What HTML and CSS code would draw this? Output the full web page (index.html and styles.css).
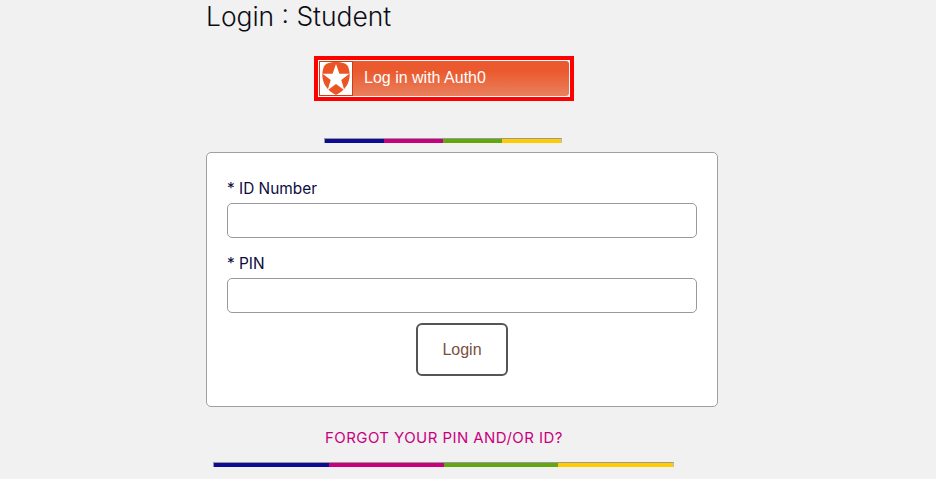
FILE: index.html
```html
<!DOCTYPE html>
<html lang="en">
<head>
    <meta charset="UTF-8">
    <meta name="viewport" content="width=device-width, initial-scale=1.0">
    <title>Login : Student</title>
    <link rel="stylesheet" href="styles.css">
</head>
<body>
    <main class="page">
        <h1 class="title">Login : Student</h1>

        <a class="auth-btn" href="#">
            <span class="auth-inner">
                <span class="auth-logo">
                    <svg width="28" height="33" viewBox="0 0 28 33">
                        <path d="M6 1.2 C8.5 .4 11 0 14 0 C17 0 19.5 .4 22 1.2 C24 1.9 25.5 3 26.3 5 C28 10 28.2 15 26.6 19.5 C24.6 25.5 20 30 14 33 C8 30 3.4 25.5 1.4 19.5 C-.2 15 0 10 1.7 5 C2.5 3 4 1.9 6 1.2 Z" fill="#eb5424"/>
                        <path d="M14 2 L17.4 11.8 L27.4 11.8 L19.3 18 L22.4 28.2 L14 22 L5.6 28.2 L8.7 18 L.6 11.8 L10.6 11.8 Z" fill="#fff"/>
                    </svg>
                </span>
                <span class="auth-text">Log in with Auth0</span>
            </span>
        </a>

        <div class="stripe stripe-small">
            <span class="blue"></span><span class="pink"></span><span class="green"></span><span class="yellow"></span>
        </div>

        <form class="card">
            <label class="field-label" for="idNumber">* ID Number</label>
            <input class="field-input" id="idNumber" type="text">
            <label class="field-label" for="pin">* PIN</label>
            <input class="field-input" id="pin" type="password">
            <button class="login-btn" type="button">Login</button>
        </form>

        <a class="forgot" href="#">FORGOT YOUR PIN AND/OR ID?</a>

        <div class="stripe stripe-large">
            <span class="blue"></span><span class="pink"></span><span class="green"></span><span class="yellow"></span>
        </div>
    </main>
</body>
</html>
```

FILE: styles.css
```css
html, body {
    margin: 0;
    padding: 0;
}
body {
    background-color: #f1f1f1;
    font-family: "Inter", Arial, sans-serif;
    overflow: hidden;
}
.page {
    width: 512px;
    margin-left: 206px;
    display: flex;
    flex-direction: column;
    align-items: flex-start;
}
.title {
    margin: 0;
    height: 56px;
    font-family: "Inter", sans-serif;
    font-size: 26.4px;
    font-weight: 300;
    line-height: 32px;
    color: #0c0c14;
}
.auth-btn {
    box-sizing: border-box;
    width: 260px;
    height: 45px;
    margin-left: 108px;
    border: 4px solid #ff0000;
    background: #fff;
    padding: 1px;
    display: block;
    text-decoration: none;
}
.auth-inner {
    display: flex;
    align-items: center;
    height: 35px;
    border-radius: 3px;
    background: linear-gradient(to bottom, #eb5a2e 0%, #eb5a2e 30%, #e8815f 100%);
}
.auth-logo {
    box-sizing: border-box;
    width: 34px;
    height: 35px;
    flex: none;
    display: flex;
    align-items: center;
    justify-content: center;
    background: #fff;
    border: 1px solid #c8401a;
}
.auth-text {
    margin-left: 11px;
    margin-bottom: 2px;
    font-family: "Liberation Sans", Arial, sans-serif;
    font-size: 16px;
    color: #fff;
}
.stripe {
    display: flex;
    height: 5px;
    box-sizing: border-box;
    border-top: 1px solid #999;
    border-left: 1px solid #999;
    border-right: 1px solid #bbb;
}
.stripe span {
    flex: 1;
}
.stripe-small {
    width: 238px;
    margin-top: 37px;
    margin-left: 118px;
}
.stripe-large {
    width: 461px;
    margin-top: 14px;
    margin-left: 7px;
}
.blue { background: #0b0b96; }
.pink { background: #c8007f; }
.green { background: #63a60e; }
.yellow { background: #ffcc00; }
.card {
    box-sizing: border-box;
    width: 512px;
    height: 255px;
    margin-top: 9px;
    padding: 25px 20px 0;
    background: #fff;
    border: 1px solid #a0a0a0;
    border-radius: 5px;
    display: flex;
    flex-direction: column;
}
.field-label {
    padding-top: 1px;
    font-size: 15.4px;
    line-height: 20px;
    color: #0c0c40;
    margin-bottom: 4px;
}
.field-input {
    box-sizing: border-box;
    height: 35px;
    width: 470px;
    margin-bottom: 15px;
    border: 1px solid #999;
    border-radius: 5px;
    background: #fff;
}
.login-btn {
    box-sizing: border-box;
    width: 92px;
    height: 53px;
    margin: -5px auto 0;
    border: 2px solid #555;
    border-radius: 6px;
    background: #fff;
    font-family: "Liberation Sans", Arial, sans-serif;
    font-size: 16px;
    color: #7a5040;
}
.forgot {
    margin-top: 21px;
    margin-left: 119px;
    font-family: "Inter", sans-serif;
    font-size: 15px;
    letter-spacing: 0.43px;
    line-height: 20px;
    color: #c8007f;
    text-decoration: none;
}
```
